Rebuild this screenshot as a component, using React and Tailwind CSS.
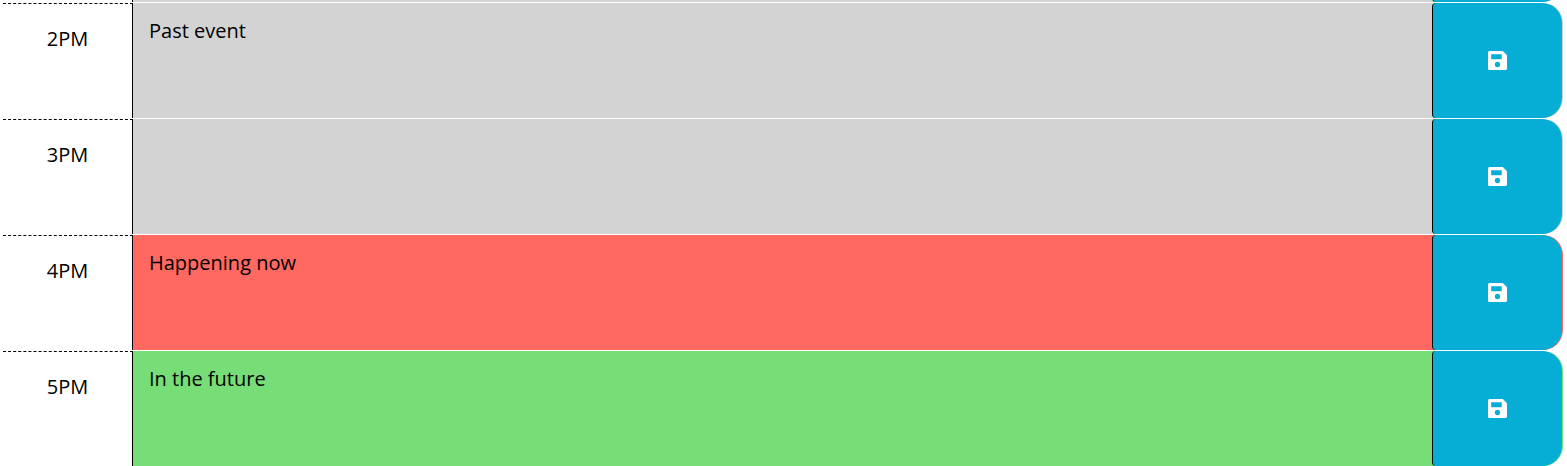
const hours = [
  { label: "2PM", text: "Past event", color: "bg-[#d3d3d3]" },
  { label: "3PM", text: "", color: "bg-[#d3d3d3]" },
  { label: "4PM", text: "Happening now", color: "bg-[#ff6961]" },
  { label: "5PM", text: "In the future", color: "bg-[#77dd77]" },
];

function SaveIcon() {
  return (
    <svg viewBox="0 0 18 18" className="size-[19px]" fill="currentColor" aria-hidden="true">
      <path
        fillRule="evenodd"
        d="M1.5 0H14l4 4v12.500a1.500 1.500 0 0 1-1.500 1.500H1.500a1.500 1.500 0 0 1-1.500-1.500V1.500a1.500 1.500 0 0 1 1.500-1.500zM3 3v4.700h10V3zM9 10.300a2.500 2.500 0 1 0 0 5a2.500 2.500 0 1 0 0-5z"
      />
    </svg>
  );
}

function TimeBlock({ label, text, color }) {
  const id = `event-${label}`;
  return (
    <div className="flex h-[115px]">
      <label
        htmlFor={id}
        className="w-1/12 shrink-0 border-t border-r border-t-black border-r-black [border-top-style:dashed] bg-white pt-5 text-center"
      >
        {label}
      </label>
      <div className={`flex min-w-0 flex-1 rounded-r-[20px] pr-px ${color}`}>
        <textarea
          id={id}
          defaultValue={text}
          className="min-w-0 flex-1 resize-none bg-transparent px-4 py-[13px] outline-none"
        />
        <button
          type="button"
          aria-label={`Save ${label}`}
          className="flex w-1/11 shrink-0 items-center justify-center rounded-l-[4px] rounded-r-[20px] border-l border-black bg-[#06aed5] text-white"
        >
          <SaveIcon />
        </button>
      </div>
    </div>
  );
}

export default function App() {
  return (
    <main className="bg-white pr-1 pl-[3px] font-['Open_Sans',sans-serif] text-[20px] leading-[30px] font-normal text-black">
      <div className="flex h-[2px] flex-col justify-end overflow-hidden">
        <div className="flex h-[115px] shrink-0">
          <div className="w-1/12 shrink-0 border-r border-black" />
          <div className="flex flex-1 justify-end rounded-r-[20px] bg-[#d3d3d3] pr-px">
            <div className="w-1/11 rounded-l-[4px] rounded-r-[20px] border-l border-black bg-[#06aed5]" />
          </div>
        </div>
      </div>
      <div className="flex flex-col gap-px pt-px">
        {hours.map((hour) => (
          <TimeBlock key={hour.label} {...hour} />
        ))}
      </div>
    </main>
  );
}
